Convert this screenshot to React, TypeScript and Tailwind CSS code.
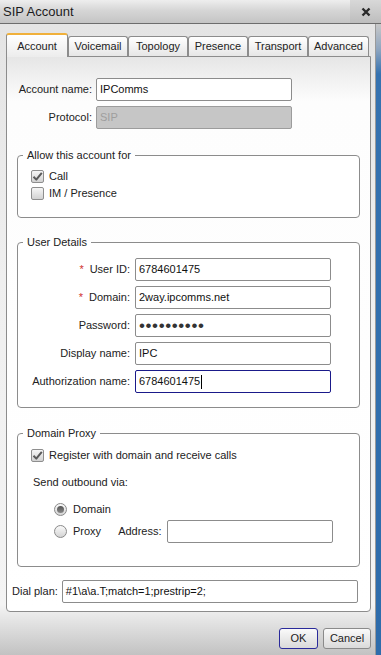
import type { ReactNode } from "react";

// SIP Account dialog — Account tab

const FONT = "font-['Liberation_Sans',Arial,sans-serif]";

function Field({
  value,
  width,
  disabled,
  focused,
  children,
}: {
  value?: string;
  width: string;
  disabled?: boolean;
  focused?: boolean;
  children?: ReactNode;
}) {
  return (
    <div
      className={`flex h-[23px] ${width} items-center rounded-[2px] border px-[3px] text-[11px] ${
        disabled
          ? "border-[#9c9c9c] bg-[#c6c6c6] text-[#9e9e9e]"
          : focused
            ? "border-[#1a1a8a] bg-white text-[#111]"
            : "border-[#8c8c8c] bg-white text-[#111]"
      }`}
    >
      {children ?? value}
      {focused && <span className="ml-[1px] h-[14px] w-[1px] bg-black" />}
    </div>
  );
}

function Check({ checked }: { checked?: boolean }) {
  return (
    <span className="flex h-[13px] w-[13px] shrink-0 items-center justify-center rounded-[2px] border border-[#8e8e8e] bg-gradient-to-b from-[#f6f6f6] to-[#d2d2d2]">
      {checked && (
        <svg width="11" height="11" viewBox="0 0 11 11">
          <path
            d="M1.5 5.8 L4.3 8.6 L9.8 1.8"
            fill="none"
            stroke="#5a5a5a"
            strokeWidth="2"
            strokeLinejoin="round"
          />
        </svg>
      )}
    </span>
  );
}

function Radio({ selected }: { selected?: boolean }) {
  return (
    <span className="flex h-[13px] w-[13px] shrink-0 items-center justify-center rounded-full border border-[#8a8a8a] bg-gradient-to-b from-[#fafafa] to-[#d4d4d4]">
      {selected && (
        <span className="h-[7px] w-[7px] rounded-full bg-gradient-to-b from-[#555] to-[#888]" />
      )}
    </span>
  );
}

function Group({ title, children }: { title: string; children: ReactNode }) {
  return (
    <fieldset className="ml-[10px] w-[343px] rounded-[4px] border border-[#8c8c8c] bg-white">
      <legend className="ml-[5px] px-[4px] text-[11px] leading-[13px] text-[#222]">
        {title}
      </legend>
      {children}
    </fieldset>
  );
}

function Row({
  label,
  req,
  children,
}: {
  label: string;
  req?: boolean;
  children: ReactNode;
}) {
  return (
    <div className="flex items-center">
      <span className="w-[117px] pr-[5px] text-right text-[11px] text-[#222]">
        {req && <span className="mr-[6px] text-[#d03030]">*</span>}
        {label}
      </span>
      {children}
    </div>
  );
}

const TABS = ["Voicemail", "Topology", "Presence", "Transport", "Advanced"];

export default function App() {
  return (
    <div className={`flex h-[655px] w-[381px] flex-col overflow-hidden ${FONT}`}>
      {/* title bar */}
      <div className="flex h-[24px] shrink-0 items-center border-b border-[#6c6c6c] bg-[linear-gradient(to_bottom,#eeeeee,#d6d6d6_45%,#c4c4c4)]">
        <span className="pl-[3px] text-[13px] text-[#1c1c1c]">SIP Account</span>
        <div className="ml-auto flex h-full w-[31px] items-center justify-center bg-[linear-gradient(to_bottom,#d8d8d8,#bdbdbd)]">
          <svg width="10" height="10" viewBox="0 0 10 10">
            <path d="M1.5 1.5 L8.5 8.5 M8.5 1.5 L1.5 8.5" stroke="#2a2a2a" strokeWidth="2.4" />
          </svg>
        </div>
      </div>

      <div className="flex flex-1">
        {/* dialog body */}
        <div className="flex w-[376px] flex-col border-r border-[#9a9a9a] bg-[linear-gradient(to_bottom,#e4e4e4_0%,#efefef_40%,#f4f4f4_92%,#c2c2c2_100%)] pl-[6px] pt-[9px]">
          {/* tabs */}
          <div className="flex h-[23px] items-end">
            <div className="relative z-10 mb-[-1px] flex h-[24px] w-[62px] items-center justify-center rounded-t-[3px] border border-b-0 border-[#8c8c8c] border-t-[#f0b03a] border-t-2 bg-[linear-gradient(to_bottom,#ffffff,#ececec)] text-[11px] text-[#222]">
              Account
            </div>
            {TABS.map((t, i) => (
              <div
                key={t}
                className={`flex h-[20px] ${i === 4 ? "w-[61px]" : "w-[60px]"} items-center justify-center rounded-t-[3px] border border-b-0 border-[#8c8c8c] bg-[linear-gradient(to_bottom,#ffffff,#e6e6e6)] text-[11px] text-[#222]`}
              >
                {t}
              </div>
            ))}
          </div>

          {/* tab panel */}
          <div className="flex w-[365px] flex-col rounded-b-[4px] border border-[#8c8c8c] bg-[linear-gradient(to_bottom,#e6e6e6_0px,#fdfdfd_45px,#ffffff_100%)] pb-[8px]">
            <div className="mt-[21px] flex flex-col gap-[5px]">
              <div className="flex items-center">
                <span className="w-[89px] pr-[4px] text-right text-[11px] text-[#222]">
                  Account name:
                </span>
                <Field width="w-[196px]" value="IPComms" />
              </div>
              <div className="flex items-center">
                <span className="w-[89px] pr-[4px] text-right text-[11px] text-[#222]">
                  Protocol:
                </span>
                <Field width="w-[196px]" value="SIP" disabled />
              </div>
            </div>

            <div className="mt-[20px]">
              <Group title="Allow this account for">
                <div className="mb-[15px] mt-[6px] flex flex-col pl-[13px]">
                  <label className="flex h-[17px] items-center gap-[5px] text-[11px] text-[#222]">
                    <Check checked />
                    Call
                  </label>
                  <label className="flex h-[17px] items-center gap-[5px] text-[11px] text-[#222]">
                    <Check />
                    IM / Presence
                  </label>
                </div>
              </Group>
            </div>

            <div className="mt-[18px]">
              <Group title="User Details">
                <div className="mb-[14px] mt-[9px] flex flex-col gap-[5px]">
                  <Row label="User ID:" req>
                    <Field width="w-[196px]" value="6784601475" />
                  </Row>
                  <Row label="Domain:" req>
                    <Field width="w-[196px]" value="2way.ipcomms.net" />
                  </Row>
                  <Row label="Password:">
                    <Field width="w-[196px]">
                      <span className="text-[17px] leading-none tracking-[0.6px] text-[#333]">••••••••••</span>
                    </Field>
                  </Row>
                  <Row label="Display name:">
                    <Field width="w-[196px]" value="IPC" />
                  </Row>
                  <Row label="Authorization name:">
                    <Field width="w-[196px]" value="6784601475" focused />
                  </Row>
                </div>
              </Group>
            </div>

            <div className="mt-[19px]">
              <Group title="Domain Proxy">
                <div className="mb-[23px] mt-[8px] flex flex-col">
                  <label className="flex h-[15px] items-center gap-[5px] pl-[13px] text-[11px] text-[#222]">
                    <Check checked />
                    Register with domain and receive calls
                  </label>
                  <span className="mt-[13px] pl-[15px] text-[11px] leading-[13px] text-[#222]">
                    Send outbound via:
                  </span>
                  <label className="mt-[13px] flex h-[15px] items-center gap-[6px] pl-[36px] text-[11px] text-[#222]">
                    <Radio selected />
                    Domain
                  </label>
                  <div className="mt-[3px] flex items-center pl-[36px] text-[11px] text-[#222]">
                    <Radio />
                    <span className="ml-[6px]">Proxy</span>
                    <span className="ml-[17px] mr-[5px]">Address:</span>
                    <Field width="w-[166px]" />
                  </div>
                </div>
              </Group>
            </div>

            <div className="mt-[13px] flex items-center gap-[4px] pl-[5px]">
              <span className="text-[11px] text-[#222]">Dial plan:</span>
              <Field width="w-[296px]" value="#1\a\a.T;match=1;prestrip=2;" />
            </div>
          </div>

          {/* buttons */}
          <div className="mt-[16px] flex justify-end gap-[5px] pr-[4px]">
            <button className="h-[21px] w-[39px] rounded-[3px] border border-[#2a2a9a] bg-[linear-gradient(to_bottom,#fafafa,#dadada)] text-[11px] text-[#222]">
              OK
            </button>
            <button className="h-[21px] w-[48px] rounded-[3px] border border-[#8a8a8a] bg-[linear-gradient(to_bottom,#fafafa,#dadada)] text-[11px] text-[#222]">
              Cancel
            </button>
          </div>
        </div>

        {/* desktop showing behind the window edge */}
        <div className="flex-1 bg-[linear-gradient(to_bottom,#c8c8c8_0px,#8fa6c0_25px,#3572b0_50px,#2e6cab_100%)]" />
      </div>
    </div>
  );
}
